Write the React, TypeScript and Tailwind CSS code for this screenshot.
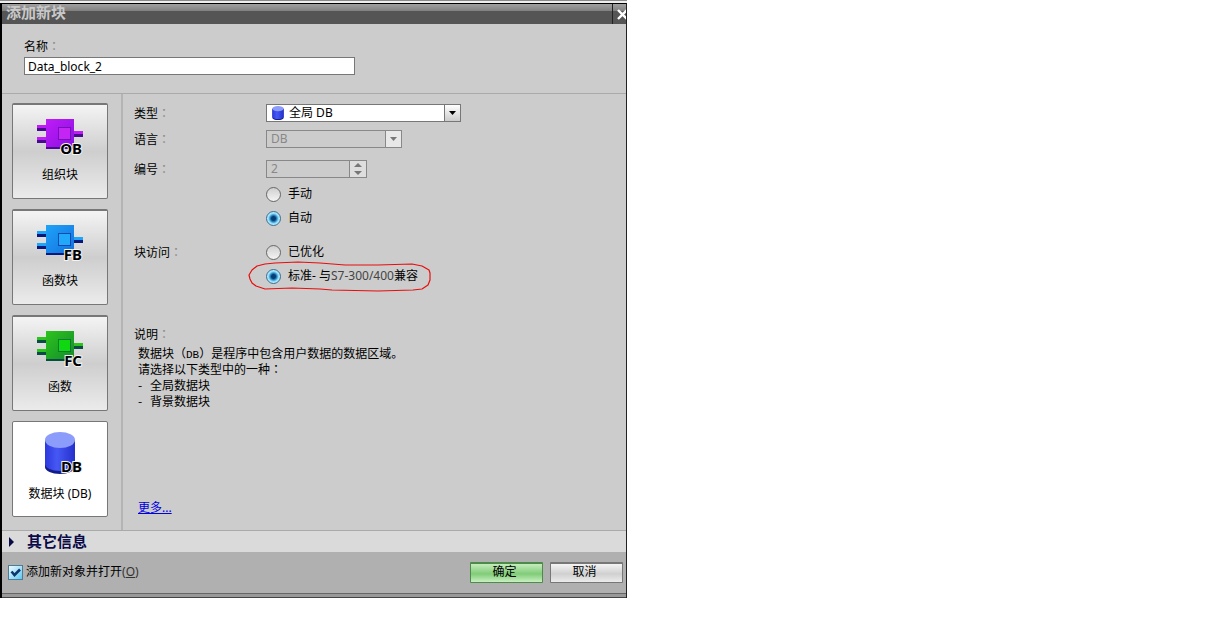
import React, { useState } from 'react';

interface BlockKind {
  id: string;
  code: string;
  label: string;
  light: string;
  mid: string;
  dark: string;
  inner: string;
}

const blockKinds: BlockKind[] = [
  { id: 'ob', code: 'OB', label: '组织块', light: '#c01cf8', mid: '#8a10e0', dark: '#4a0a90', inner: '#c424f4' },
  { id: 'fb', code: 'FB', label: '函数块', light: '#1ea4f8', mid: '#1470e0', dark: '#06187c', inner: '#22a8fa' },
  { id: 'fc', code: 'FC', label: '函数', light: '#2cc41c', mid: '#148c2c', dark: '#084c44', inner: '#10d810' },
  { id: 'db', code: 'DB', label: '数据块 (DB)', light: '#4c5cf4', mid: '#2c38d8', dark: '#141c90', inner: '#96a4fc' },
];

const IconCode = ({ code, y }: { code: string; y: number }) => (
  <text
    x="46"
    y={y}
    textAnchor="end"
    fontSize="15"
    fontWeight="700"
    fill="#000"
    stroke="#f4f4f4"
    strokeWidth="2"
    paintOrder="stroke"
    className="font-['Noto_Sans',sans-serif]"
  >
    {code}
  </text>
);

const ChipIcon = ({ kind }: { kind: BlockKind }) => (
  <svg width="48" height="42" viewBox="0 0 48 42" className="overflow-visible" aria-hidden="true">
    <defs>
      <linearGradient id={`chip-${kind.id}`} x1="0" y1="0" x2="1" y2="1">
        <stop offset="0" stopColor={kind.light} />
        <stop offset="1" stopColor={kind.mid} />
      </linearGradient>
    </defs>
    <path d="M1 9h9v3H1zM1 21h9v3H1zM38 15h9v3h-9z" fill={kind.light} />
    <path d="M1 12h9v3H1zM1 24h9v3H1zM38 18h9v3h-9zM10 30h28v3H10z" fill={kind.dark} />
    <rect x="10" y="3" width="28" height="28" fill={`url(#chip-${kind.id})`} />
    <rect x="22.5" y="11.5" width="12" height="12" fill={kind.inner} stroke={kind.dark} strokeOpacity="0.6" />
    <IconCode code={kind.code} y={38} />
  </svg>
);

const Cylinder = ({ id }: { id: string }) => (
  <>
    <defs>
      <linearGradient id={id} x1="0" y1="0" x2="1" y2="0">
        <stop offset="0" stopColor="#2c38dc" />
        <stop offset="0.4" stopColor="#4658f4" />
        <stop offset="1" stopColor="#2430cc" />
      </linearGradient>
    </defs>
    <path d="M9 8v27c0 4 7 7 15 7s15-3 15-7V8z" fill="#141c88" />
    <path d="M9 8v24c0 4 7 7 15 7s15-3 15-7V8z" fill={`url(#${id})`} />
    <ellipse cx="24" cy="8" rx="15" ry="8" fill="#8c9cfa" />
  </>
);

const DatabaseIcon = () => (
  <svg width="48" height="44" viewBox="0 0 48 44" className="overflow-visible" aria-hidden="true">
    <g transform="translate(0 -1)">
      <Cylinder id="cyl-large" />
    </g>
    <IconCode code="DB" y={39} />
  </svg>
);

const FieldLabel = ({ htmlFor, children }: { htmlFor?: string; children: React.ReactNode }) => {
  const Tag = htmlFor ? 'label' : 'span';
  return (
    <Tag htmlFor={htmlFor} className="block leading-[18px]">
      {children}
      <span lang="zh-TW" className="font-['Noto_Sans_CJK_TC',sans-serif] text-[#888]">：</span>
    </Tag>
  );
};

interface RadioProps {
  name: string;
  checked: boolean;
  onChange: () => void;
  children: React.ReactNode;
}

const Radio = ({ name, checked, onChange, children }: RadioProps) => (
  <label className="flex h-6 items-center gap-[7px]">
    <input
      type="radio"
      name={name}
      checked={checked}
      onChange={onChange}
      className="size-[15px] shrink-0 appearance-none rounded-full border border-[#666] bg-linear-to-b from-[#d0d0d0] to-[#f4f4f4] checked:border-[#3c6c90] checked:bg-[radial-gradient(circle,#0a3c74_0_2px,#1c78b4_3px,#8cdcfa_5px,#b4e8fc_6px)]"
    />
    <span>{children}</span>
  </label>
);

export default function App() {
  const [name, setName] = useState('Data_block_2');
  const [selected, setSelected] = useState('db');
  const [numbering, setNumbering] = useState('auto');
  const [access, setAccess] = useState('standard');
  const [openAfter, setOpenAfter] = useState(true);

  return (
    <main lang="zh-CN" className="font-['Noto_Sans','Noto_Sans_CJK_SC',sans-serif] text-[12px] leading-4 text-black">
      <section className="w-[627px] max-w-full border-t border-[#888]">
        <div className="h-[2px] bg-[#eee]" />
        <div className="border-t border-r border-l-2 border-black border-r-[#222] bg-[#cccccc]">
          {/* Title bar */}
          <header className="flex h-5 bg-linear-to-b from-[#a0a0a0] from-0% via-[#808080] via-35% to-[#555] to-36%">
            <h1 className="flex-1 pl-1 text-[15px] leading-4 font-bold text-[#c8c8c8]">添加新块</h1>
            <button type="button" aria-label="关闭" className="w-[14px] overflow-hidden border-l border-[#222] pl-1">
              <svg width="11" height="11" viewBox="0 0 11 11" fill="none" stroke="#fff" strokeWidth="2.4" aria-hidden="true">
                <path d="M1 1l9 9M10 1l-9 9" />
              </svg>
            </button>
          </header>

          {/* Name */}
          <div className="border-b border-[#aaa] pt-[13px] pb-[18px] pl-[22px]">
            <FieldLabel htmlFor="name">名称</FieldLabel>
            <input
              id="name"
              value={name}
              onChange={(e) => setName(e.target.value)}
              className="mt-px block h-[18px] w-[331px] border border-[#777] bg-white px-[3px]"
            />
          </div>

          <div className="flex">
            {/* Block kinds */}
            <nav className="flex w-[121px] shrink-0 flex-col gap-[10px] border-r-2 border-[#b4b4b4] pt-[9px] pb-[13px] pl-[10px]">
              {blockKinds.map((kind) => (
                <button
                  key={kind.id}
                  type="button"
                  aria-pressed={selected === kind.id}
                  onClick={() => setSelected(kind.id)}
                  className={`flex size-24 flex-col items-center gap-[9px] rounded-[2px] border border-[#777] pt-[11px] ${
                    selected === kind.id
                      ? 'bg-white'
                      : 'border-t-2 bg-linear-to-b from-[#f4f4f4] from-0% via-[#cecece] via-50% to-[#ebebeb]'
                  }`}
                >
                  {kind.id === 'db' ? <DatabaseIcon /> : <ChipIcon kind={kind} />}
                  <span>{kind.label}</span>
                </button>
              ))}
            </nav>

            {/* Settings */}
            <div className="flex flex-1 flex-col pt-[10px] pb-[14px] pl-[11px]">
              <div className="grid grid-cols-[132px_1fr]">
                <FieldLabel htmlFor="type">类型</FieldLabel>
                <div className="relative mb-2 w-[195px]">
                  <select id="type" className="block h-[18px] w-full appearance-none border border-[#777] bg-white pl-[22px]">
                    <option>全局 DB</option>
                    <option>背景 DB</option>
                  </select>
                  <svg width="12" height="14" viewBox="8 0 32 42" preserveAspectRatio="none" className="pointer-events-none absolute top-[2px] left-[6px]" aria-hidden="true">
                    <Cylinder id="cyl-small" />
                  </svg>
                  <span className="pointer-events-none absolute inset-y-0 right-0 flex w-[17px] items-center justify-center border border-[#777] bg-linear-to-b from-white to-[#ccc]">
                    <svg width="7" height="4" viewBox="0 0 7 4" aria-hidden="true"><path d="M0 0h7L3.5 4z" /></svg>
                  </span>
                </div>

                <FieldLabel htmlFor="language">语言</FieldLabel>
                <div className="relative mb-3 w-[136px]">
                  <select id="language" disabled className="block h-[18px] w-full appearance-none border border-[#888] bg-transparent pl-1 text-[#888] opacity-100">
                    <option>DB</option>
                  </select>
                  <span className="pointer-events-none absolute inset-y-0 right-0 flex w-[17px] items-center justify-center border border-[#888] bg-[#e8e8e8]">
                    <svg width="7" height="4" viewBox="0 0 7 4" fill="#777" aria-hidden="true"><path d="M0 0h7L3.5 4z" /></svg>
                  </span>
                </div>

                <FieldLabel htmlFor="number">编号</FieldLabel>
                <div className="mb-1 flex h-[18px] w-[101px] border border-[#888]">
                  <input id="number" disabled value="2" readOnly className="min-w-0 flex-1 bg-transparent pl-1 text-[#888]" />
                  <div className="flex w-[17px] flex-col border-l border-[#888] bg-[#dedede]">
                    <button type="button" disabled aria-label="增加" className="flex h-2 items-center justify-center">
                      <svg width="8" height="4" viewBox="0 0 8 4" fill="#777" aria-hidden="true"><path d="M0 4h8L4 0z" /></svg>
                    </button>
                    <button type="button" disabled aria-label="减少" className="flex h-2 items-center justify-center">
                      <svg width="8" height="4" viewBox="0 0 8 4" fill="#777" aria-hidden="true"><path d="M0 0h8L4 4z" /></svg>
                    </button>
                  </div>
                </div>

                <div className="col-start-2 mb-[10px]">
                  <Radio name="numbering" checked={numbering === 'manual'} onChange={() => setNumbering('manual')}>手动</Radio>
                  <Radio name="numbering" checked={numbering === 'auto'} onChange={() => setNumbering('auto')}>自动</Radio>
                </div>

                <div className="pt-[3px]">
                  <FieldLabel>块访问</FieldLabel>
                </div>
                <div>
                  <Radio name="access" checked={access === 'optimized'} onChange={() => setAccess('optimized')}>已优化</Radio>
                  <div className="relative">
                    <Radio name="access" checked={access === 'standard'} onChange={() => setAccess('standard')}>
                      标准- 与<span className="text-[#444]">S7-300/400</span>兼容
                    </Radio>
                    {/* Hand-drawn marker */}
                    <svg
                      width="184"
                      height="32"
                      viewBox="0 0 184 32"
                      fill="none"
                      stroke="#e80c0c"
                      strokeWidth="1.2"
                      strokeLinejoin="round"
                      className="pointer-events-none absolute -top-1 -left-[18px]"
                      aria-hidden="true"
                    >
                      <path d="M2 19L1 15L4 10L9 6L17 4L27 3L50 2L72 3L97 5L130 5L164 4L174 6L181 10L182 13L182 20L180 25L174 29L165 30L130 31L84 30L72 29L44 28L17 29L8 26L4 23Z" />
                    </svg>
                  </div>
                </div>
              </div>

              <div className="mt-[37px]">
                <FieldLabel>说明</FieldLabel>
                <div className="mt-px pl-1 font-['Noto_Sans_CJK_SC',sans-serif]">
                  <p className="h-4">数据块（<span className="font-['Liberation_Mono',monospace] text-[11px]">DB</span>）是程序中包含用户数据的数据区域。</p>
                  <p className="h-4">请选择以下类型中的一种<span lang="zh-TW">：</span></p>
                  <ul>
                    {['全局数据块', '背景数据块'].map((item) => (
                      <li key={item} className="flex h-4">
                        <span className="w-3">-</span>
                        {item}
                      </li>
                    ))}
                  </ul>
                </div>
              </div>

              <a href="#more" className="mt-auto self-start pl-1 text-[#0000e0] underline">更多...</a>
            </div>
          </div>

          {/* Collapsed details */}
          <button type="button" aria-expanded="false" className="flex h-[22px] w-full items-center border-t border-[#aaa] bg-[#dadada] pl-[7px] text-[15px] leading-4 font-bold text-[#0a0a48]">
            <svg width="5" height="10" viewBox="0 0 5 10" fill="#0a0a48" className="mr-[13px]" aria-hidden="true"><path d="M0 0l5 5-5 5z" /></svg>
            <span className="pb-[2px]">其它信息</span>
          </button>

          {/* Actions */}
          <footer className="flex h-[41px] items-center gap-[7px] bg-[#b0b0b0] pr-[3px] pl-[6px]">
            <label className="mr-auto flex items-center gap-[3px]">
              <span className="relative flex size-[15px]">
                <input
                  type="checkbox"
                  checked={openAfter}
                  onChange={(e) => setOpenAfter(e.target.checked)}
                  className="peer size-full appearance-none border border-[#4c7c98] bg-linear-to-br from-[#f0faff] to-[#58c8f0]"
                />
                <svg width="15" height="15" viewBox="0 0 15 15" fill="none" stroke="#0c3870" strokeWidth="2.6" className="pointer-events-none absolute inset-0 hidden peer-checked:block" aria-hidden="true">
                  <path d="M3.5 6.5l3 3.5L12 4.5" />
                </svg>
              </span>
              <span className="pb-[2px]">添加新对象并打开<span className="text-[#333]">(<u>O</u>)</span></span>
            </label>
            <button type="button" className="h-[21px] w-[73px] rounded-[1px] border border-t-2 border-[#4e8a4a] bg-linear-to-b from-[#c4ecbc] from-0% via-[#80cc78] via-55% to-[#c8f0c0] pr-1 pb-[2px]">确定</button>
            <button type="button" className="h-[21px] w-[73px] rounded-[1px] border border-t-2 border-[#777] bg-linear-to-b from-[#f4f4f4] from-0% via-[#d0d0d0] via-55% to-[#ececec] pr-1 pb-[2px]">取消</button>
          </footer>
          <div className="h-[5px] border-y border-t-[#666] border-b-[#444] bg-[#999]" />
        </div>
      </section>
    </main>
  );
}
